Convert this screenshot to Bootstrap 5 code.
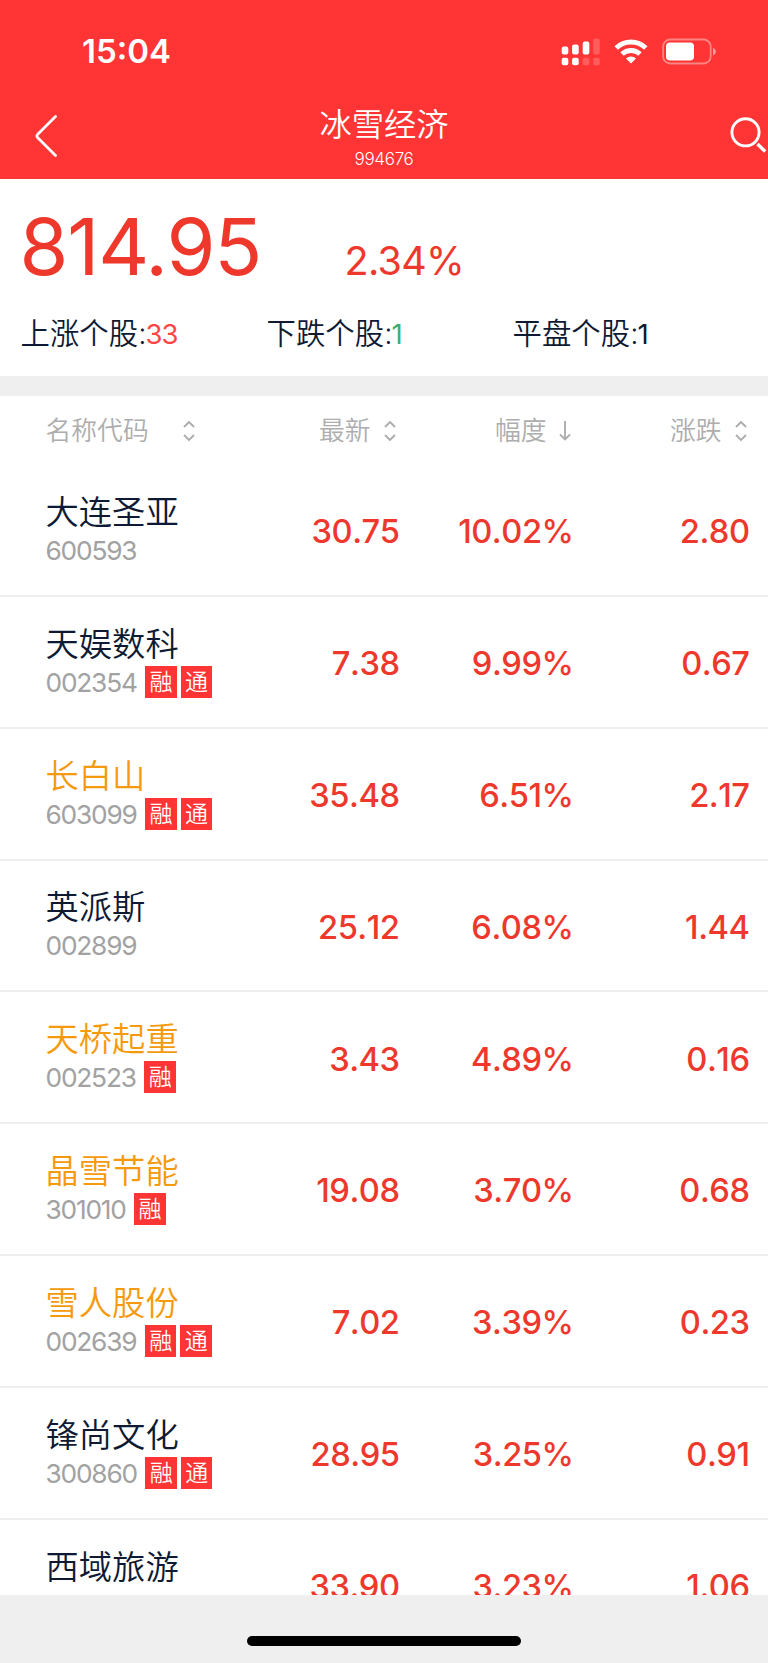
<!DOCTYPE html>
<html lang="zh-CN">
<head>
<meta charset="utf-8">
<meta name="viewport" content="width=device-width, initial-scale=1">
<title>冰雪经济 994676</title>
<link href="https://cdn.jsdelivr.net/npm/bootstrap@5.3.0/dist/css/bootstrap.min.css" rel="stylesheet">
<style>
  body { font-family: Inter, "Noto Sans CJK SC", sans-serif; color: #0e1a33; background: #fff; }
  .screen { height: 1663px; }
  .topbar { background: #ff3434; height: 179.4px; }
  .statusbar { height: 103px; padding: 0 52px 0 82px; }
  .clock { font-size: 33px; font-weight: 600; line-height: 1; }
  .titlebar { height: 76px; display: grid; grid-template-columns: 1fr auto 1fr; }
  .back { margin: 11px 0 0 35px; }
  .search { margin: 14px 1px 0 auto; }
  .heading { font-size: 32.3px; font-weight: 350; line-height: 40px; margin-top: 2px; }
  .subcode { font-size: 17px; font-weight: 300; line-height: 20px; margin-top: 4px; letter-spacing: -.3px; }
  .up { color: #ee382c; }
  .summary { height: 197px; padding: 28px 0 0 20.6px; }
  .quote { height: 107px; }
  .bignum { font-size: 79px; font-weight: 400; line-height: 1; width: 325px; letter-spacing: -1.200px; margin-left: -1px; }
  .bigpct { font-size: 39.5px; font-weight: 400; line-height: 1; letter-spacing: -.7px; }
  .stat { width: 246px; font-size: 29.4px; line-height: 40px; font-weight: 350; }
  .stat span { font-size: 27.5px; font-weight: 400; letter-spacing: -1px; margin-left: -1px; }
  .rise { color: #ff4545; }
  .fall { color: #3fae74; }
  .band { height: 20px; background: #efefef; }
  .colheads { height: 68.6px; font-size: 25.8px; color: #adadad; font-weight: 350; line-height: 1; }
  .c-name { width: 240px; padding-left: 45.5px; }
  .c-price { width: 159.5px; }
  .c-pct { width: 174px; }
  .c-chg { width: 176px; }
  .stock { height: 131.86px; border-bottom: 2px solid #eee; padding-top: 2px; }
  .stock .val { font-size: 32.7px; font-weight: 500; line-height: 1; color: #ee382c; padding-top: 1px; font-kerning: none; letter-spacing: -.5px; }
  .sname { font-size: 33.3px; font-weight: 350; line-height: 40px; }
  .held { color: #f59a0c; }
  .scode { font-size: 26.3px; font-weight: 400; line-height: 37px; height: 37px; color: #a2a2a2; letter-spacing: -1.200px; margin-bottom: 1px; }
  .scode .digits { margin-right: 8.6px; }
  .tag { width: 31.5px; height: 32px; background: #ff3434; color: #fff; font-size: 23px; line-height: 32px; font-weight: 350; letter-spacing: 0; margin-top: -1px; }
  .homearea { height: 68px; background: #efefef; padding-top: 41px; }
  .homebar { width: 274px; height: 10px; background: #000; border-radius: 5px; }
</style>
</head>
<body>
<div class="screen d-flex flex-column overflow-hidden">
  <header class="topbar text-white flex-shrink-0">
    <div class="statusbar d-flex align-items-center justify-content-between">
      <div class="clock">15:04</div>
      <svg width="155" height="28" viewBox="561 37.500 155 28" fill="#fff">
        <rect x="561.7" y="46" width="6.6" height="8" rx="2"/><rect x="572.1" y="44" width="6.6" height="10" rx="2"/><rect x="582.7" y="41" width="6.6" height="13" rx="2"/>
        <rect x="593.2" y="38" width="6.6" height="16" rx="2" opacity=".2"/>
        <rect x="561.7" y="57.3" width="6.6" height="7.4" rx="2"/><rect x="572.1" y="57.3" width="6.6" height="7.4" rx="2"/>
        <g opacity=".2"><rect x="582.7" y="57.3" width="6.6" height="7.4" rx="2"/><rect x="593.2" y="57.3" width="6.6" height="7.4" rx="2"/></g>
        <g fill="none" stroke="#fff" stroke-width="5"><path d="M616.2 47.5a21.2 21.2 0 0 1 29.6 0"/><path d="M622 53.6a13 13 0 0 1 18 0" stroke-width="4.8"/></g>
        <path d="M631 63l-5-5a7.300 7.300 0 0 1 10 0z"/>
        <rect x="663.1" y="39" width="47.6" height="24" rx="7" fill="none" stroke="#fff" stroke-width="1.800" opacity=".4"/>
        <rect x="666" y="42" width="28" height="18" rx="4"/>
        <path d="M713 47.300q2.900 1.200 2.900 3.800t-2.900 3.800z" opacity=".5"/>
      </svg>
    </div>
    <div class="titlebar">
      <svg class="back" width="24" height="44" viewBox="35 114 24 44" fill="none" stroke="#fff" stroke-width="2.800" stroke-linecap="round" stroke-linejoin="round"><path d="M55.500 116.500L37.500 134.500q-1.200 1.500 0 3L55.500 155.500"/></svg>
      <div class="text-center">
        <div class="heading">冰雪经济</div>
        <div class="subcode">994676</div>
      </div>
      <svg class="search" width="37" height="37" viewBox="729 117 37 37" fill="none" stroke="#fff"><circle cx="744.500" cy="132.300" r="13.600" stroke-width="2.900"/><path d="M756.500 144l7.700 7.500" stroke-width="3.400"/></svg>
    </div>
  </header>

  <section class="summary flex-shrink-0">
    <div class="quote d-flex align-items-baseline up">
      <div class="bignum">814.95</div>
      <div class="bigpct">2.34%</div>
    </div>
    <div class="d-flex">
      <div class="stat">上涨个股:<span class="rise">33</span></div>
      <div class="stat">下跌个股:<span class="fall">1</span></div>
      <div class="stat">平盘个股:<span>1</span></div>
    </div>
  </section>
  <div class="band flex-shrink-0"></div>

  <div class="colheads d-flex align-items-center flex-shrink-0">
    <div class="c-name d-flex align-items-center">名称代码<svg width="12" height="20" style="margin-left:34.500px"><use href="#sort"/></svg></div>
    <div class="c-price d-flex align-items-center justify-content-end pe-1">最新<svg width="12" height="20" style="margin-left:13px"><use href="#sort"/></svg></div>
    <div class="c-pct d-flex align-items-center justify-content-end" style="padding-right:3px">幅度<svg width="12" height="20" style="margin-left:12px" fill="none" stroke="#adadad" stroke-width="1.900"><path d="M6 0v18.500M1 13.500l5 5l5-5"/></svg></div>
    <div class="c-chg d-flex align-items-center justify-content-end" style="padding-right:3px">涨跌<svg width="12" height="20" style="margin-left:13px"><use href="#sort"/></svg></div>
  </div>

  <main id="stocks" class="flex-grow-1 overflow-hidden" style="min-height:0"></main>

  <footer class="homearea flex-shrink-0"><div class="homebar mx-auto"></div></footer>
</div>
<svg width="0" height="0" class="d-none"><symbol id="sort" viewBox="0 0 12 20"><path d="M1 6l5-5l5 5M1 14l5 5l5-5" fill="none" stroke="#adadad" stroke-width="1.900"/></symbol></svg>
<script>
  const stocks = [
    ['大连圣亚', '600593', '', '30.75', '10.02%', '2.80', 0],
    ['天娱数科', '002354', '融通', '7.38', '9.99%', '0.67', 0],
    ['长白山', '603099', '融通', '35.48', '6.51%', '2.17', 1],
    ['英派斯', '002899', '', '25.12', '6.08%', '1.44', 0],
    ['天桥起重', '002523', '融', '3.43', '4.89%', '0.16', 1],
    ['晶雪节能', '301010', '融', '19.08', '3.70%', '0.68', 1],
    ['雪人股份', '002639', '融通', '7.02', '3.39%', '0.23', 1],
    ['锋尚文化', '300860', '融通', '28.95', '3.25%', '0.91', 0],
    ['西域旅游', '', '', '33.90', '3.23%', '1.06', 0]
  ];
  document.getElementById('stocks').innerHTML = stocks.map(([name, code, tags, price, pct, chg, held]) => `
    <div class="stock d-flex align-items-center">
      <div class="c-name">
        <div class="sname ${held ? 'held' : ''}">${name}</div>
        <div class="scode d-flex align-items-center"><span class="digits">${code}</span>${[...tags].map(t => `<span class="tag text-center me-1">${t}</span>`).join('')}</div>
      </div>
      <div class="c-price val text-end">${price}</div>
      <div class="c-pct val text-end">${pct}</div>
      <div class="c-chg val text-end">${chg}</div>
    </div>`).join('');
</script>
<script src="https://cdn.jsdelivr.net/npm/bootstrap@5.3.0/dist/js/bootstrap.bundle.min.js"></script>
</body>
</html>
